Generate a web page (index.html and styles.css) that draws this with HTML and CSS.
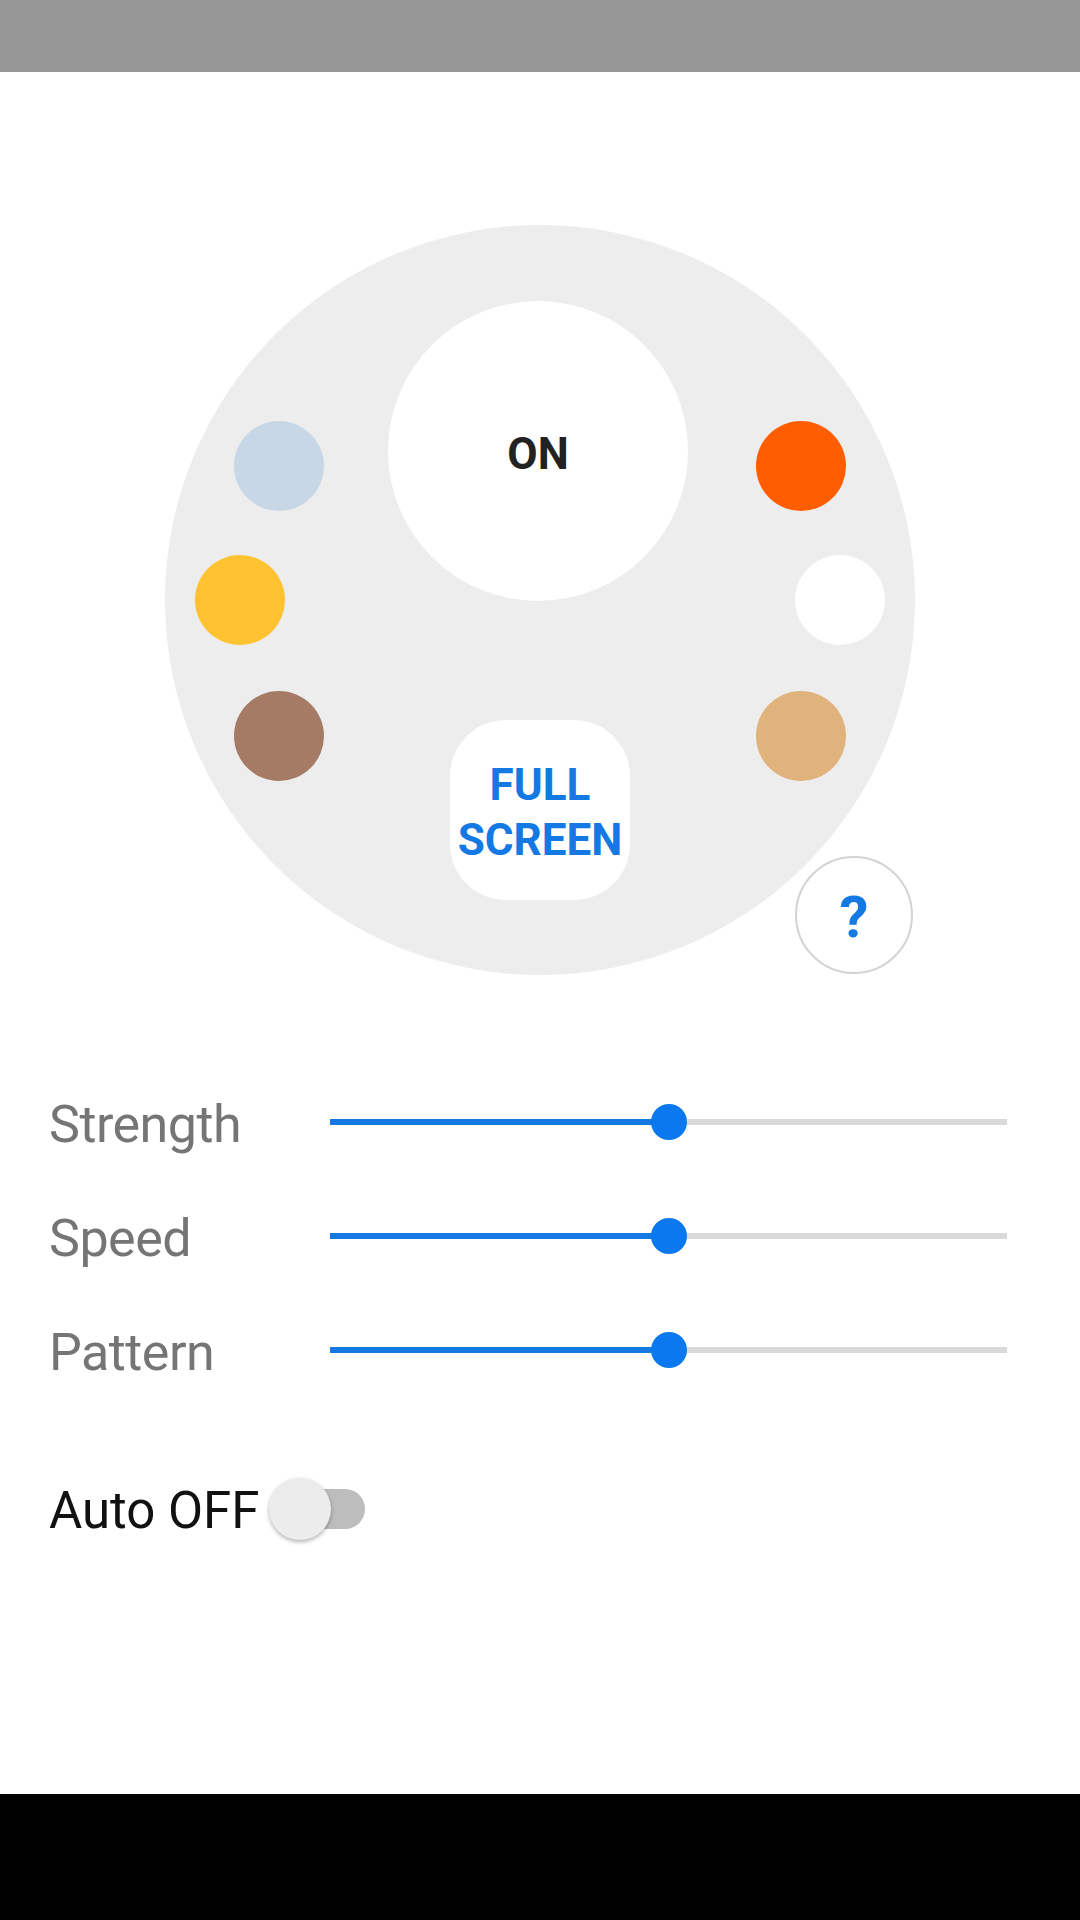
FILE: index.html
```html
<!DOCTYPE html>
<html>
<head>
<meta charset="utf-8">
<link rel="stylesheet" href="styles.css">
</head>
<body>
<div class="screen">
  <div class="statusbar"></div>
  <main class="content">
    <div class="dial">
      <div class="on-btn">ON</div>
      <div class="full-btn">FULL<br>SCREEN</div>
      <span class="dot dot-blue"></span>
      <span class="dot dot-yellow"></span>
      <span class="dot dot-brown"></span>
      <span class="dot dot-orange"></span>
      <span class="dot dot-white"></span>
      <span class="dot dot-tan"></span>
      <div class="help">?</div>
    </div>
    <div class="controls">
      <div class="row">
        <div class="label">Strength</div>
        <div class="slider"><div class="fill" style="width:50%"></div><div class="thumb" style="left:50%"></div></div>
      </div>
      <div class="row">
        <div class="label">Speed</div>
        <div class="slider"><div class="fill" style="width:50%"></div><div class="thumb" style="left:50%"></div></div>
      </div>
      <div class="row">
        <div class="label">Pattern</div>
        <div class="slider"><div class="fill" style="width:50%"></div><div class="thumb" style="left:50%"></div></div>
      </div>
      <div class="row auto-row">
        <div class="auto-label">Auto OFF</div>
        <div class="switch"><div class="switch-track"></div><div class="switch-thumb"></div></div>
      </div>
    </div>
  </main>
  <div class="navbar"></div>
</div>
</body>
</html>
```

FILE: styles.css
```css
html, body {
  margin: 0;
  padding: 0;
  background: #fff;
}
body {
  font-family: Roboto, "Liberation Sans", sans-serif;
}
.screen {
  width: 1080px;
  height: 1920px;
  display: flex;
  flex-direction: column;
  overflow: hidden;
}
.statusbar {
  height: 72px;
  background: #979797;
  flex: none;
}
.content {
  flex: 1;
  display: flex;
  flex-direction: column;
}
.navbar {
  height: 126px;
  background: #000;
  flex: none;
}
.dial {
  position: relative;
  width: 750px;
  height: 750px;
  margin: 153px 0 0 165px;
  border-radius: 50%;
  background: #ededed;
  display: flex;
  flex-direction: column;
  align-items: center;
  box-sizing: border-box;
  padding-top: 76px;
}
.on-btn {
  width: 300px;
  height: 300px;
  box-sizing: border-box;
  padding-top: 5px;
  border-radius: 50%;
  background: #fff;
  display: flex;
  align-items: center;
  justify-content: center;
  font-weight: 700;
  font-size: 44px;
  color: #222;
  margin-left: -4px;
}
.full-btn {
  margin-top: 119px;
  width: 180px;
  height: 180px;
  box-sizing: border-box;
  padding-top: 6px;
  border-radius: 56px;
  background: #fff;
  display: flex;
  align-items: center;
  justify-content: center;
  text-align: center;
  font-weight: 700;
  font-size: 44px;
  line-height: 55px;
  color: #1479e2;
}
.dot {
  position: absolute;
  width: 90px;
  height: 90px;
  border-radius: 50%;
}
.dot-blue { left: 69px; top: 196px; background: #c8d7e6; }
.dot-yellow { left: 30px; top: 330px; background: #ffc230; }
.dot-brown { left: 69px; top: 466px; background: #a57b66; }
.dot-orange { left: 591px; top: 196px; background: #ff5d00; }
.dot-white { left: 630px; top: 330px; background: #fff; }
.dot-tan { left: 591px; top: 466px; background: #e0b27c; }
.help {
  position: absolute;
  left: 630px;
  top: 631px;
  width: 118px;
  height: 118px;
  box-sizing: border-box;
  padding-top: 4px;
  border: 2px solid #d3d3d3;
  border-radius: 50%;
  background: #fff;
  display: flex;
  align-items: center;
  justify-content: center;
  font-weight: 700;
  font-size: 58px;
  color: #1479e2;
}
.controls {
  margin-top: 90px;
  padding: 0 73px 0 49px;
  display: flex;
  flex-direction: column;
}
.row {
  height: 114px;
  display: flex;
  align-items: center;
}
.label {
  width: 281px;
  flex: none;
  padding-top: 5px;
  font-size: 52px;
  letter-spacing: -0.5px;
  color: #757575;
}
.slider {
  position: relative;
  flex: 1;
  height: 6px;
  background: #d9d9d9;
}
.fill {
  position: absolute;
  left: 0;
  top: 0;
  height: 100%;
  background: #1479e2;
}
.thumb {
  position: absolute;
  top: 50%;
  width: 36px;
  height: 36px;
  margin: -18px 0 0 -18px;
  border-radius: 50%;
  background: #0a78ee;
}
.auto-row {
  margin-top: 45px;
}
.auto-label {
  padding-top: 2px;
  font-size: 51px;
  color: #111;
}
.switch {
  position: relative;
  width: 96px;
  height: 62px;
  margin-left: 9px;
}
.switch-track {
  position: absolute;
  left: 20px;
  top: 11px;
  width: 76px;
  height: 40px;
  border-radius: 20px;
  background: #bdbdbd;
}
.switch-thumb {
  position: absolute;
  left: 0;
  top: 0;
  width: 62px;
  height: 62px;
  border-radius: 50%;
  background: #ececec;
  box-shadow: 0 2px 4px rgba(0,0,0,0.3);
}
```
